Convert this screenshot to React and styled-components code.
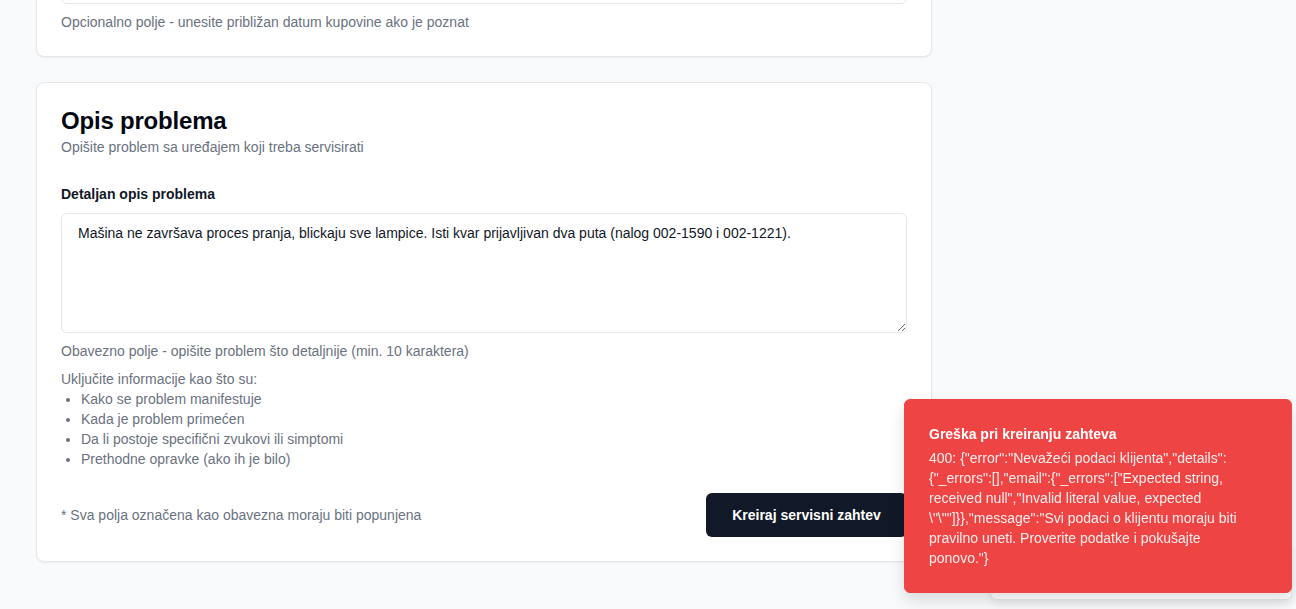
import React from 'react';
import styled, { createGlobalStyle } from 'styled-components';

const GlobalStyle = createGlobalStyle`
  * { box-sizing: border-box; }
  html, body { margin: 0; padding: 0; }
  body {
    background: #f9fafb;
    font-family: "Segoe UI", "Liberation Sans", Arial, sans-serif;
    color: #111827;
    overflow: hidden;
  }
`;

const Page = styled.main`
  width: 100%;
  height: 609px;
  overflow: hidden;
  background: #f9fafb;
`;

// the page is scrolled: only the bottom of the first card is in view
const Column = styled.div`
  width: 896px;
  margin-left: 36px;
  margin-top: -61px;
  display: flex;
  flex-direction: column;
  gap: 25px;
`;

const Card = styled.section`
  background: #fff;
  border: 1px solid #e5e7eb;
  border-radius: 8px;
  box-shadow: 0 1px 2px rgba(0, 0, 0, 0.05);
`;

const CardHeader = styled.div`
  padding: 24px;
  display: flex;
  flex-direction: column;
  gap: 4px;
`;

const Title = styled.h2`
  margin: 2px 0 0;
  font-size: 24px;
  line-height: 24px;
  font-weight: 600;
  color: #030712;
  letter-spacing: -0.2px;
`;

const Muted = styled.p`
  margin: ${(p) => p.$mt || 0}px 0 0;
  font-size: 14px;
  line-height: 20px;
  color: #6b7280;
`;

const CardContent = styled.div`
  padding: ${(p) => (p.$top ? '24px' : '0')} 24px 24px;
`;

const Label = styled.label`
  display: block;
  font-size: 14px;
  line-height: 20px;
  font-weight: 600;
  color: #111827;
  margin: 3px 0 9px;
`;

const Input = styled.div`
  height: 40px;
  border: 1px solid #e5e7eb;
  border-radius: 6px;
  background: #fff;
`;

const TextArea = styled.textarea`
  display: block;
  width: 100%;
  height: 120px;
  padding: 9px 16px;
  border: 1px solid #e5e7eb;
  border-radius: 6px;
  font-family: inherit;
  font-size: 14px;
  line-height: 20px;
  color: #111827;
  background: #fff;
  resize: vertical;
  outline: none;
`;

const Hints = styled.ul`
  margin: 0;
  padding-left: 20px;
  font-size: 14px;
  line-height: 20px;
  color: #6b7280;
  li::marker { color: #6b7280; }
`;

const Footer = styled.div`
  margin-top: 24px;
  display: flex;
  align-items: center;
  justify-content: space-between;
`;

const Button = styled.button`
  height: 44px;
  width: 201px;
  border: none;
  border-radius: 6px;
  background: #111827;
  color: #fff;
  font-family: inherit;
  font-size: 14px;
  font-weight: 600;
  cursor: pointer;
`;

const ToastStack = styled.div`
  position: fixed;
  left: 904px;
  top: 399px;
  width: 388px;
`;

const ToastBehind = styled.div`
  position: absolute;
  left: 86px;
  right: 0;
  bottom: -7px;
  height: 60px;
  background: #fff;
  border: 1px solid #e5e7eb;
  border-radius: 6px;
  box-shadow: 0 4px 10px rgba(0, 0, 0, 0.08);
`;

const Toast = styled.div`
  position: relative;
  background: #ef4444;
  border: 1px solid #ef4444;
  border-radius: 6px;
  padding: 24px 32px 24px 24px;
  color: #fff;
  box-shadow: 0 8px 16px rgba(0, 0, 0, 0.12);
  display: flex;
  flex-direction: column;
  gap: 4px;
`;

const ToastTitle = styled.div`
  font-size: 14px;
  line-height: 20px;
  font-weight: 600;
`;

const ToastBody = styled.div`
  font-size: 14px;
  line-height: 20px;
  opacity: 0.9;
  white-space: nowrap;
`;

export default function App() {
  return (
    <Page>
      <GlobalStyle />
      <Column>
        <Card>
          <CardContent $top>
            <Input />
            <Muted $mt={8}>Opcionalno polje - unesite približan datum kupovine ako je poznat</Muted>
          </CardContent>
        </Card>

        <Card>
          <CardHeader>
            <Title>Opis problema</Title>
            <Muted>Opišite problem sa uređajem koji treba servisirati</Muted>
          </CardHeader>
          <CardContent>
            <Label>Detaljan opis problema</Label>
            <TextArea
              readOnly
              defaultValue="Mašina ne završava proces pranja, blickaju sve lampice. Isti kvar prijavljivan dva puta (nalog 002-1590 i 002-1221)."
            />
            <Muted $mt={8}>Obavezno polje - opišite problem što detaljnije (min. 10 karaktera)</Muted>
            <Muted $mt={8}>Uključite informacije kao što su:</Muted>
            <Hints>
              <li>Kako se problem manifestuje</li>
              <li>Kada je problem primećen</li>
              <li>Da li postoje specifični zvukovi ili simptomi</li>
              <li>Prethodne opravke (ako ih je bilo)</li>
            </Hints>
            <Footer>
              <Muted>* Sva polja označena kao obavezna moraju biti popunjena</Muted>
              <Button>Kreiraj servisni zahtev</Button>
            </Footer>
          </CardContent>
        </Card>
      </Column>

      <ToastStack>
        <ToastBehind />
        <Toast>
          <ToastTitle>Greška pri kreiranju zahteva</ToastTitle>
          <ToastBody>
            400: {'{"error":"Nevažeći podaci klijenta","details":'}
            <br />
            {'{"_errors":[],"email":{"_errors":["Expected string,'}
            <br />
            {'received null","Invalid literal value, expected'}
            <br />
            {'\\"\\""]}},"message":"Svi podaci o klijentu moraju biti'}
            <br />
            {'pravilno uneti. Proverite podatke i pokušajte'}
            <br />
            {'ponovo."}'}
          </ToastBody>
        </Toast>
      </ToastStack>
    </Page>
  );
}
